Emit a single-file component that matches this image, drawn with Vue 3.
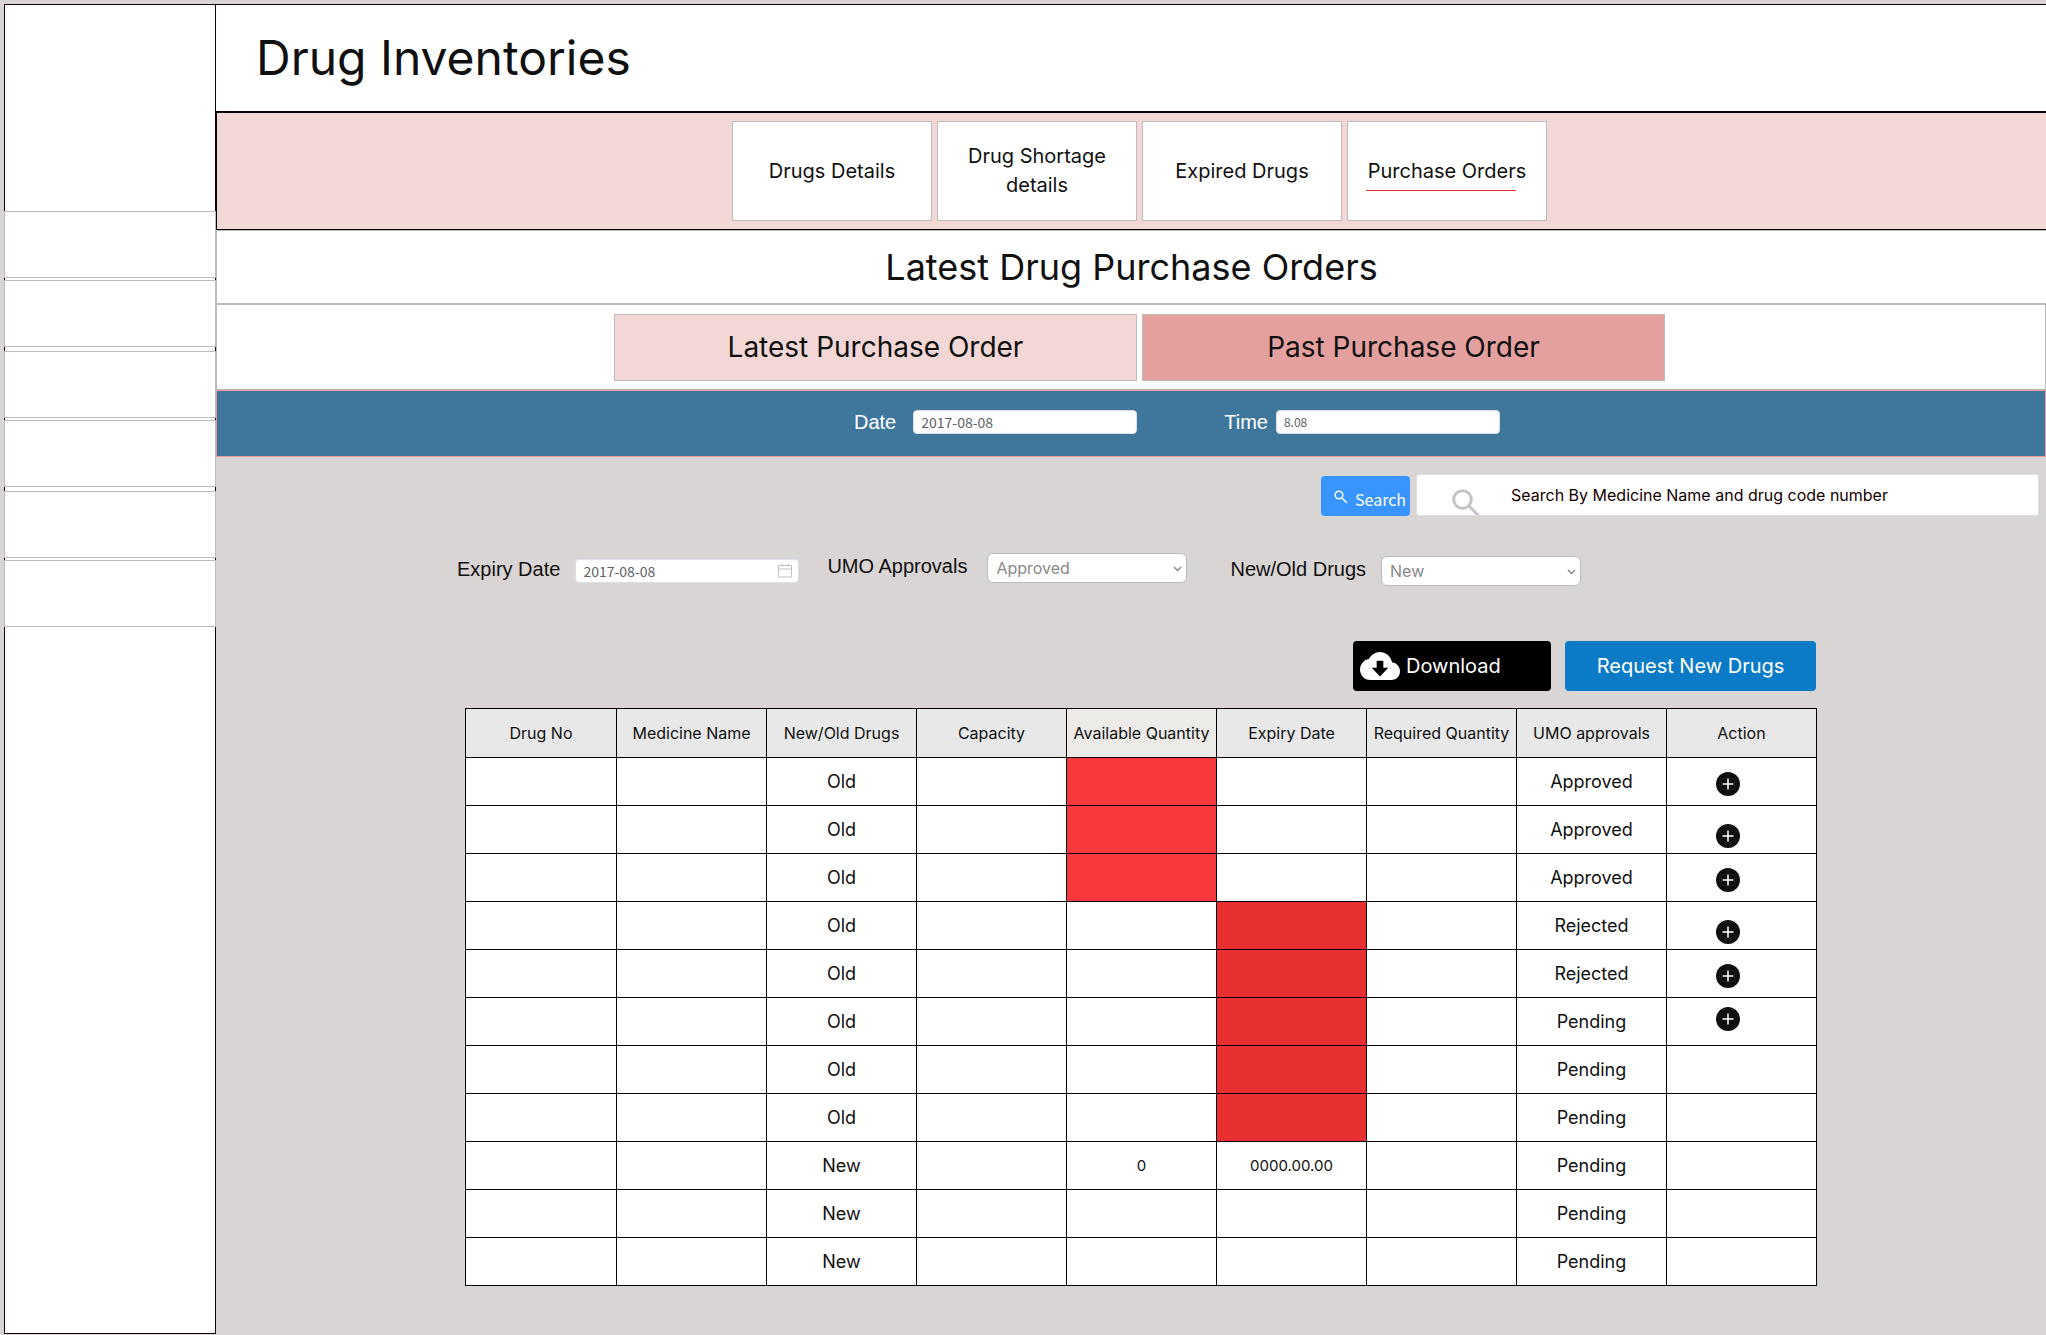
<script setup>
import { ref } from 'vue'

const menuGroups = [2, 2, 2]
const tabs = ['Drugs Details', 'Drug Shortage details', 'Expired Drugs', 'Purchase Orders']
const activeTab = ref('Purchase Orders')

const date = ref('2017-08-08')
const time = ref('8.08')
const expiryDate = ref('2017-08-08')
const query = ref('Search By Medicine Name and drug code number')
const approval = ref('Approved')
const drugAge = ref('New')

const columns = [
  'Drug No', 'Medicine Name', 'New/Old Drugs', 'Capacity', 'Available Quantity',
  'Expiry Date', 'Required Quantity', 'UMO approvals', 'Action',
]

const rows = [
  { age: 'Old', status: 'Approved', shortage: true, action: 'middle' },
  { age: 'Old', status: 'Approved', shortage: true, action: 'bottom' },
  { age: 'Old', status: 'Approved', shortage: true, action: 'middle' },
  { age: 'Old', status: 'Rejected', expired: true, action: 'bottom' },
  { age: 'Old', status: 'Rejected', expired: true, action: 'middle' },
  { age: 'Old', status: 'Pending', expired: true, action: 'top' },
  { age: 'Old', status: 'Pending', expired: true },
  { age: 'Old', status: 'Pending', expired: true },
  { age: 'New', status: 'Pending', quantity: '0', expiry: '0000.00.00' },
  { age: 'New', status: 'Pending' },
  { age: 'New', status: 'Pending' },
]
</script>

<template>
  <div class="page">
    <aside class="sidebar">
      <div v-for="(count, g) in menuGroups" :key="g" class="menu-group">
        <div v-for="n in count" :key="n" class="menu-item"></div>
      </div>
    </aside>

    <main class="main">
      <header class="header">
        <h1>Drug Inventories</h1>
      </header>

      <nav class="tabs">
        <button
          v-for="tab in tabs"
          :key="tab"
          type="button"
          class="tab"
          :class="{ active: tab === activeTab }"
          @click="activeTab = tab"
        >
          <span>{{ tab }}</span>
        </button>
      </nav>

      <section class="title-bar">
        <h2>Latest Drug Purchase Orders</h2>
      </section>

      <section class="order-switch">
        <button type="button" class="order latest">Latest Purchase Order</button>
        <button type="button" class="order past">Past Purchase Order</button>
      </section>

      <section class="time-bar">
        <label for="date">Date</label>
        <input id="date" v-model="date" class="field date" type="text" />
        <label for="time" class="time-label">Time</label>
        <input id="time" v-model="time" class="field time" type="text" />
      </section>

      <form class="search-row" @submit.prevent>
        <button type="submit" class="search-button">
          <svg width="14" height="14" viewBox="0 0 14 14" fill="none" stroke="currentColor" stroke-width="1.5">
            <circle cx="5" cy="5" r="3.8" />
            <path d="M8 8l5 5" />
          </svg>
          <span>Search</span>
        </button>
        <div class="search-box">
          <svg width="28" height="26" viewBox="0 0 28 26" fill="none" stroke="#c2c4c8" stroke-width="3">
            <circle cx="10.500" cy="10.500" r="8.800" />
            <path d="M17 17l11 11" />
          </svg>
          <input v-model="query" type="text" aria-label="Search by medicine name and drug code number" />
        </div>
      </form>

      <section class="filters">
        <div class="filter">
          <label for="expiry">Expiry Date</label>
          <div class="date-picker">
            <input id="expiry" v-model="expiryDate" class="field" type="text" />
            <svg width="14" height="15" viewBox="0 0 14 15" fill="none" stroke="#c0c0c0">
              <path d="M.5 2.500h13v11.500H.5zM.5 6h13M4 .5v3M10 .5v3" />
            </svg>
          </div>
        </div>
        <div class="filter approvals">
          <label for="approvals">UMO Approvals</label>
          <div class="select">
            <select id="approvals" v-model="approval">
              <option>Approved</option>
              <option>Rejected</option>
              <option>Pending</option>
            </select>
            <svg width="9" height="6" viewBox="0 0 9 6" fill="none" stroke="#888" stroke-width="1.500">
              <path d="M1 1l3.500 3.500L8 1" />
            </svg>
          </div>
        </div>
        <div class="filter age">
          <label for="age">New/Old Drugs</label>
          <div class="select">
            <select id="age" v-model="drugAge">
              <option>New</option>
              <option>Old</option>
            </select>
            <svg width="9" height="6" viewBox="0 0 9 6" fill="none" stroke="#888" stroke-width="1.500">
              <path d="M1 1l3.500 3.500L8 1" />
            </svg>
          </div>
        </div>
      </section>

      <section class="orders">
        <div class="actions">
          <button type="button" class="download">
            <svg width="40" height="28" viewBox="0 4 24 16" preserveAspectRatio="none" fill="#fff">
              <path d="M19.350 10.040A7.490 7.490 0 0 0 12 4C9.110 4 6.600 5.640 5.350 8.040A5.994 5.994 0 0 0 0 14c0 3.310 2.690 6 6 6h13c2.760 0 5-2.240 5-5 0-2.640-2.050-4.780-4.650-4.960zM17 13l-5 5-5-5h3V9h4v4h3z" />
            </svg>
            <span>Download</span>
          </button>
          <button type="button" class="request">Request New Drugs</button>
        </div>

        <table>
          <thead>
            <tr>
              <th v-for="column in columns" :key="column" scope="col">{{ column }}</th>
            </tr>
          </thead>
          <tbody>
            <tr v-for="(row, i) in rows" :key="i">
              <td></td>
              <td></td>
              <td>{{ row.age }}</td>
              <td></td>
              <td class="number" :class="{ shortage: row.shortage }">{{ row.quantity }}</td>
              <td class="number" :class="{ expired: row.expired }">{{ row.expiry }}</td>
              <td></td>
              <td>{{ row.status }}</td>
              <td class="action" :class="row.action">
                <button v-if="row.action" type="button" class="add" aria-label="Add">
                  <svg width="24" height="24" viewBox="0 0 24 24">
                    <circle cx="12" cy="12" r="12" fill="#101010" />
                    <path d="M12 6.500v11M6.500 12h11" stroke="#fff" stroke-width="1.500" />
                  </svg>
                </button>
              </td>
            </tr>
          </tbody>
        </table>
      </section>
    </main>
  </div>
</template>

<style>
body {
  margin: 0;
  background: #d9d5d4;
}
</style>

<style scoped>
* {
  box-sizing: border-box;
}

.page {
  display: grid;
  grid-template-columns: 212px 1fr;
  min-height: 100vh;
  padding: 4px 0 1px 4px;
  background: #d9d5d4;
  color: #101010;
  font-family: Inter, sans-serif;
}

button,
input,
select {
  margin: 0;
  color: inherit;
  font-family: inherit;
}

h1,
h2 {
  margin: 0;
  font-weight: 400;
}

svg {
  display: block;
  flex: none;
}

.sidebar {
  display: flex;
  flex-direction: column;
  gap: 4px;
  padding-top: 206px;
  border: 1px solid #140000;
  background: #fff;
}

.menu-group {
  display: flex;
  flex-direction: column;
  gap: 2px;
  margin: 0 -1px;
}

.menu-item {
  height: 67px;
  border: 1px solid #bbb;
  background: #fff;
}

.header {
  height: 108px;
  padding: 17px 0 0 40px;
  border: solid #140000;
  border-width: 1px 0;
  background: #fff;
}

.header h1 {
  font-size: 48px;
  line-height: 72px;
}

.tabs {
  display: flex;
  justify-content: center;
  gap: 5px;
  padding: 8px 0 8px 16px;
  border: solid #000;
  border-width: 1px 0 1px 1px;
  background: #f3d7d7;
}

.tab {
  width: 200px;
  height: 100px;
  padding: 0 10px;
  border: 1px solid #bbb;
  background: #fff;
  font-size: 20px;
  line-height: 29px;
}

.tab.active {
  position: relative;
}

.tab.active::after {
  content: '';
  position: absolute;
  left: 18px;
  top: 68px;
  width: 150px;
  height: 1px;
  background: #e83030;
}

.title-bar {
  display: flex;
  align-items: center;
  justify-content: center;
  height: 74px;
  border: solid #bbb;
  border-width: 1px 0 1px 1px;
  background: #fff;
}

.title-bar h2 {
  font-size: 36px;
  line-height: 52px;
}

.order-switch {
  display: flex;
  justify-content: center;
  gap: 5px;
  padding: 9px 0 8px 17px;
  border: 1px solid #bbb;
  background: #fff;
}

.order {
  width: 523px;
  height: 67px;
  padding: 0 0 2px;
  border: 1px solid #bbb;
  font-size: 28px;
}

.latest {
  background: #f3d7d7;
}

.past {
  background: #e3a09e;
}

.time-bar {
  display: flex;
  align-items: center;
  height: 67px;
  padding: 0 0 4px 637px;
  border: 1px solid #ee9a9a;
  background: #3f769c;
  color: #fff;
  font: 20px/24px "Liberation Sans", Arial, sans-serif;
}

.field {
  width: 224px;
  height: 24px;
  padding: 0 7px;
  border: 1px solid #dcdfe6;
  border-radius: 4px;
  background: #fff;
  color: #606266;
  font: 14px/20px "Noto Sans CJK SC", sans-serif;
}

.date {
  margin-left: 17px;
}

.time-label {
  margin-left: 87px;
}

.time {
  margin-left: 8px;
  font-size: 12px;
}

.search-row {
  display: flex;
  align-items: flex-end;
  justify-content: flex-end;
  gap: 6px;
  padding: 17px 7px 0 0;
}

.search-button {
  display: flex;
  gap: 7px;
  width: 89px;
  height: 40px;
  padding: 14px 0 0 13px;
  border: 0;
  border-radius: 4px;
  background: #3895ff;
  color: #fff;
  font: 16px/18px "Noto Sans CJK SC", sans-serif;
}

.search-box {
  display: flex;
  align-items: flex-end;
  width: 623px;
  height: 42px;
  padding-left: 35px;
  border: 1px solid #dcdfe6;
  border-radius: 3px;
  background: #fff;
  overflow: hidden;
}

.search-box input {
  flex: 1;
  min-width: 0;
  height: 40px;
  padding: 0 0 0 31px;
  border: 0;
  background: none;
  color: #140000;
  font-size: 16px;
}

.filters {
  display: flex;
  align-items: flex-end;
  height: 33px;
  margin-top: 37px;
  padding-left: 241px;
  font: 20px/24px "Liberation Sans", Arial, sans-serif;
}

.filter {
  display: flex;
  align-items: center;
  gap: 15px;
  height: 30px;
}

.filter label {
  padding-bottom: 4px;
}

.approvals {
  align-self: flex-start;
  gap: 20px;
  margin-left: 28px;
}

.age {
  margin-left: 43px;
}

.date-picker,
.select {
  position: relative;
}

.date-picker .field {
  display: block;
}

.date-picker svg {
  position: absolute;
  right: 7px;
  top: 4px;
}

.select select {
  display: block;
  appearance: none;
  width: 200px;
  height: 30px;
  padding: 0 8px;
  border: 1px solid #bbb;
  border-radius: 6px;
  background: #fff;
  color: #888;
  font: 16px/24px Inter, sans-serif;
}

.select svg {
  position: absolute;
  right: 5px;
  top: 13px;
}

.orders {
  margin: 55px 229px 0 249px;
}

.actions {
  display: flex;
  justify-content: flex-end;
  gap: 14px;
  margin: 0 1px 17px 0;
}

.download,
.request {
  height: 50px;
  border: 0;
  border-radius: 4px;
  color: #fff;
  font-size: 20px;
}

.download {
  display: flex;
  align-items: center;
  gap: 6px;
  width: 198px;
  padding: 0 7px;
  background: #000;
}

.request {
  width: 251px;
  background: #0b7bc7;
}

table {
  width: 100%;
  border-collapse: collapse;
  table-layout: fixed;
  background: #fff;
}

th,
td {
  height: 48px;
  padding: 0;
  border: 1px solid #0a0000;
  font-size: 18px;
  line-height: 24px;
  text-align: center;
}

th {
  height: 49px;
  background: #e8e8e8;
  font-size: 16px;
  font-weight: 400;
}

th:first-child {
  width: 151px;
}

th:nth-child(5) {
  background: #ecebe8;
}

.number {
  font-size: 15px;
}

.shortage {
  background: #f63a3b;
}

.expired {
  background: #e93030;
}

.action {
  padding-right: 28px;
}

.action.top {
  padding-top: 9px;
  vertical-align: top;
}

.action.middle {
  padding-top: 4px;
}

.action.bottom {
  padding-bottom: 5px;
  vertical-align: bottom;
}

.add {
  display: block;
  margin: 0 auto;
  padding: 0;
  border: 0;
  background: none;
}
</style>
